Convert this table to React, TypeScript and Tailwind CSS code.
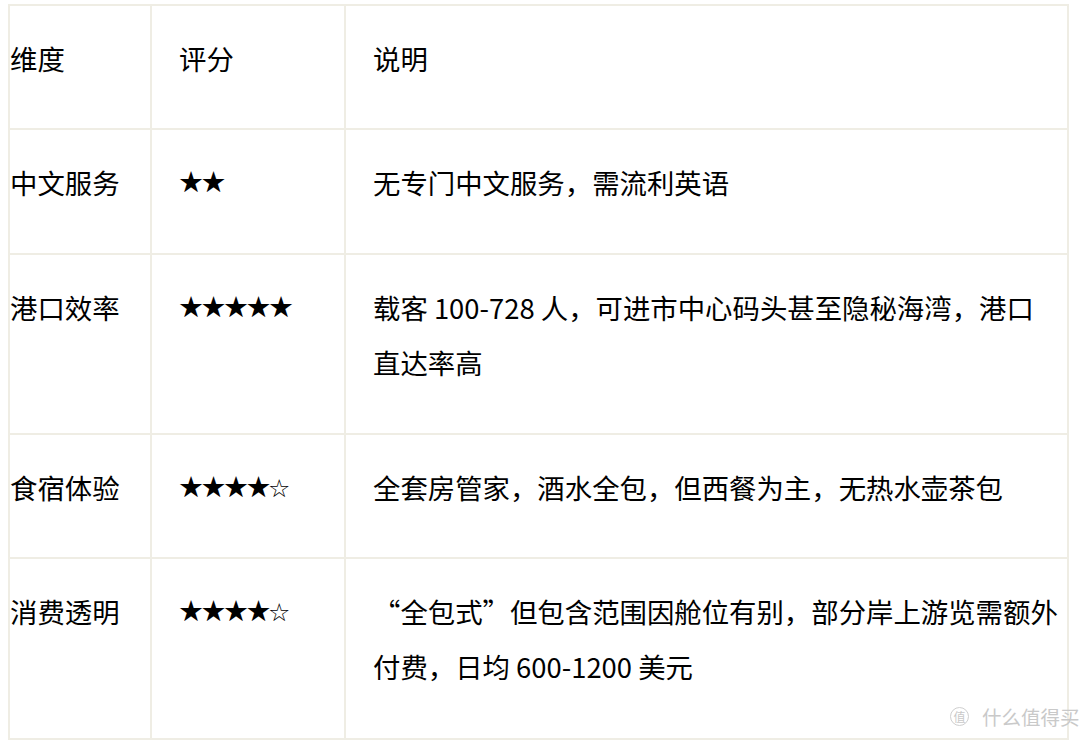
import React from "react";

const hollow = <span className="text-[25px]">☆</span>;

const rows: { dim: string; stars: React.ReactNode; desc: string[]; h: string }[] = [
  { dim: "中文服务", stars: "★★", desc: ["无专门中文服务，需流利英语"], h: "h-[125px]" },
  {
    dim: "港口效率",
    stars: "★★★★★",
    desc: ["载客 100-728 人，可进市中心码头甚至隐秘海湾，港口", "直达率高"],
    h: "h-[180px]",
  },
  {
    dim: "食宿体验",
    stars: <>★★★★{hollow}</>,
    desc: ["全套房管家，酒水全包，但西餐为主，无热水壶茶包"],
    h: "h-[124px]",
  },
  {
    dim: "消费透明",
    stars: <>★★★★{hollow}</>,
    desc: ["“全包式”但包含范围因舱位有别，部分岸上游览需额外", "付费，日均 600-1200 美元"],
    h: "h-[181px]",
  },
];

const cell = "border-r-2 border-b-2 border-[#efede4] pt-[25px] leading-[55px] whitespace-nowrap";

export default function App() {
  return (
    <div
      className="relative w-[1080px] h-[740px] overflow-hidden bg-white text-black"
      style={{ fontFamily: '"Noto Sans CJK SC", "Noto Sans", sans-serif' }}
    >
      <div className="pt-[4px] pl-[8px]">
        <div className="grid w-[1061px] grid-cols-[142px_194px_723px] border-l-2 border-t-2 border-[#efede4] text-[27.4px]">
          <div className={`${cell} h-[124px] pl-0`}>维度</div>
          <div className={`${cell} h-[124px] pl-[27px]`}>评分</div>
          <div className={`${cell} h-[124px] pl-[27px]`}>说明</div>
          {rows.map((r) => (
            <React.Fragment key={r.dim}>
              <div className={`${cell} ${r.h} pl-0`}>{r.dim}</div>
              <div
                className={`${cell} ${r.h} pl-[26px] text-[29px] tracking-[-3.5px]`}
                style={{ fontFamily: '"DejaVu Sans", sans-serif' }}
              >
                {r.stars}
              </div>
              <div className={`${cell} ${r.h} pl-[27px]`}>
                {r.desc.map((d) => (
                  <div key={d}>{d}</div>
                ))}
              </div>
            </React.Fragment>
          ))}
        </div>
      </div>
      <div className="absolute left-[950px] top-[707px] flex items-center gap-[13px] text-[#c9c9c9]">
        <div className="flex h-[19px] w-[19px] items-center justify-center rounded-full border border-[#cfcfcf] text-[12px] leading-none">
          值
        </div>
        <div className="text-[19.5px] leading-none">什么值得买</div>
      </div>
    </div>
  );
}
